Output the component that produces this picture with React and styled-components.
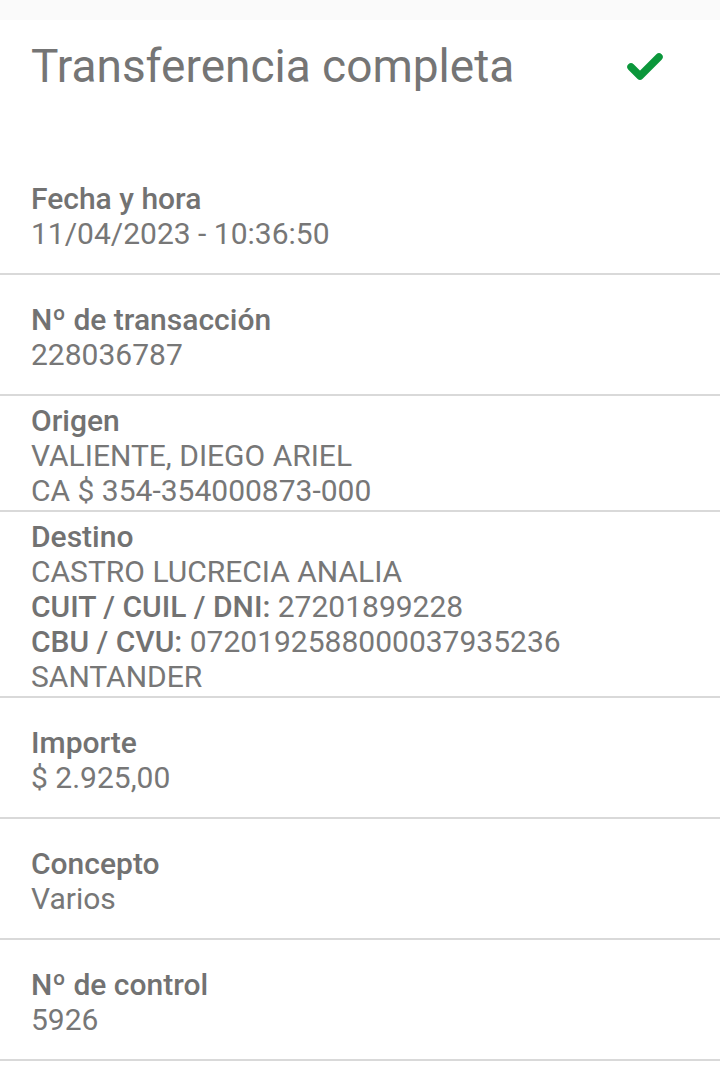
import React from 'react'
import styled, { createGlobalStyle } from 'styled-components'

const GlobalStyle = createGlobalStyle`
  body {
    margin: 0;
    background: #ffffff;
    font-family: Roboto, "Noto Sans", "Liberation Sans", sans-serif;
  }
`

const Screen = styled.div`
  display: flex;
  flex-direction: column;
  width: 720px;
  min-height: 1079px;
  background: #ffffff;
`

const TopBand = styled.div`
  height: 20px;
  background: #fafafa;
`

const Header = styled.div`
  display: flex;
  align-items: flex-start;
  justify-content: space-between;
  height: 116px;
  padding: 18px 55px 0 31px;
`

const Title = styled.h1`
  margin: 0;
  font-size: 46px;
  line-height: 56px;
  font-weight: 400;
  color: #757575;
`

const Check = styled.svg`
  width: 40px;
  height: 32px;
  margin-top: 12px;
`

// short rows are padded to a fixed height, long ones just hug their lines
const Row = styled.div`
  display: flex;
  flex-direction: column;
  justify-content: center;
  min-height: ${(p) => (p.$multi ? '0' : '110px')};
  padding: 7px 31px 2px;
  border-bottom: 2px solid #d9d9d9;
`

const Label = styled.div`
  font-size: 30px;
  line-height: 35px;
  font-weight: 500;
  color: #727272;
`

const Value = styled.div`
  font-size: 30px;
  line-height: 35px;
  font-weight: 400;
  color: #777777;
`

const Key = styled.span`
  font-weight: 500;
  color: #727272;
`

const rows = [
  { label: 'Fecha y hora', lines: ['11/04/2023 - 10:36:50'] },
  { label: 'Nº de transacción', lines: ['228036787'] },
  { label: 'Origen', lines: ['VALIENTE, DIEGO ARIEL', 'CA $ 354-354000873-000'] },
  {
    label: 'Destino',
    lines: [
      'CASTRO LUCRECIA ANALIA',
      ['CUIT / CUIL / DNI:', ' 27201899228'],
      ['CBU / CVU:', ' 0720192588000037935236'],
      'SANTANDER',
    ],
  },
  { label: 'Importe', lines: ['$ 2.925,00'] },
  { label: 'Concepto', lines: ['Varios'] },
  { label: 'Nº de control', lines: ['5926'] },
]

const App = () => {
  return (
    <Screen>
      <GlobalStyle />
      <TopBand />
      <Header>
        <Title>Transferencia completa</Title>
        <Check viewBox="0 0 40 32">
          <path
            d="M6 17 L15 26 L34 7"
            fill="none"
            stroke="#0b973b"
            strokeWidth="7.5"
            strokeLinecap="round"
            strokeLinejoin="round"
          />
        </Check>
      </Header>
      {rows.map((row) => (
        <Row key={row.label} $multi={row.lines.length > 1}>
          <Label>{row.label}</Label>
          {row.lines.map((line, i) =>
            Array.isArray(line) ? (
              <Value key={i}>
                <Key>{line[0]}</Key>
                {line[1]}
              </Value>
            ) : (
              <Value key={i}>{line}</Value>
            )
          )}
        </Row>
      ))}
    </Screen>
  )
}

export default App
